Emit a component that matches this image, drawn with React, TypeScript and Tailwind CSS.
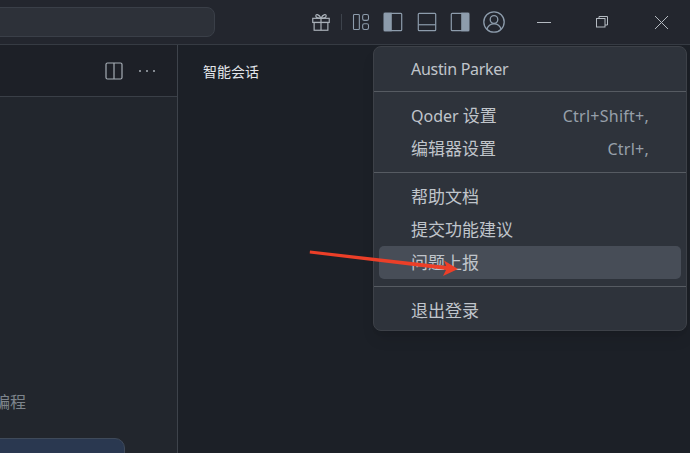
import React from "react";

const font = { fontFamily: '"Noto Sans", "Noto Sans CJK SC", sans-serif' };

function Stroke({ children, size = 24, className = "" }: { children: React.ReactNode; size?: number; className?: string }) {
  return (
    <svg width={size} height={size} viewBox="0 0 24 24" fill="none" stroke="currentColor" strokeWidth="1.300" className={className}>
      {children}
    </svg>
  );
}

function Row({ label, shortcut, active }: { label: React.ReactNode; shortcut?: string; active?: boolean }) {
  return (
    <div className={`mx-[5px] flex h-[33px] shrink-0 items-center justify-between rounded-[5px] pl-[32px] pr-[32px] ${active ? "bg-[#474d57]" : ""}`}>
      <span className="text-[17px]">{label}</span>
      {shortcut && <span className="tracking-[0.25px] text-[#97a0aa]">{shortcut}</span>}
    </div>
  );
}

export default function App() {
  return (
    <div style={font} className="relative flex h-[453px] w-[690px] flex-col overflow-hidden bg-[#1e2229] text-[#c0c5cb]">
      {/* Title bar */}
      <header className="flex h-[45px] shrink-0 items-center border-b border-[#363b43] bg-[#23262e]">
        <div className="ml-[-10px] h-[30px] w-[225px] rounded-[8px] border border-[#3a3f48] bg-[#2d3139]" />
        <div className="ml-auto flex items-center text-[#8d9cac]">
          <Stroke size={22} className="text-[#a9b0b8]">
            <rect x="3" y="8" width="18" height="4.500" />
            <rect x="4.500" y="12.500" width="15" height="8.500" />
            <path d="M12 8v13M12 8C10 3.500 5.500 2.500 6.500 6c.4 1.500 3.500 2 5.500 2s5.100-.5 5.500-2C18.500 2.500 14 3.500 12 8" />
          </Stroke>
          <div className="ml-[9px] h-[16px] w-px bg-[#3d434c]" />
          <Stroke size={20} className="ml-[9px]">
            <rect x="3" y="3" width="7" height="18" rx="1" />
            <rect x="14" y="3" width="7" height="7" rx="2" />
            <rect x="14" y="14" width="7" height="7" rx="2" />
          </Stroke>
          <Stroke size={22} className="ml-[11px]">
            <rect x="2.500" y="2.500" width="19" height="19" rx="1" />
            <rect x="2.500" y="2.500" width="7.500" height="19" fill="currentColor" />
          </Stroke>
          <Stroke size={22} className="ml-[12px]">
            <rect x="2.500" y="2.500" width="19" height="19" rx="1" />
            <path d="M2.500 15h19" />
          </Stroke>
          <Stroke size={22} className="ml-[11px]">
            <rect x="2.500" y="2.500" width="19" height="19" rx="1" />
            <rect x="14" y="2.500" width="7.500" height="19" fill="currentColor" />
          </Stroke>
          <Stroke size={24} className="ml-[11px]">
            <circle cx="12" cy="12" r="10.200" />
            <circle cx="12" cy="9.500" r="3.800" />
            <path d="M5 19c1-3.500 4-5.200 7-5.200s6 1.700 7 5.200" />
          </Stroke>
        </div>
        <div className="flex items-center text-[#b4bac1]">
          <div className="ml-[31px] h-px w-[14px] bg-[#b4bac1]" />
          <svg width="14" height="14" viewBox="0 0 14 14" fill="none" stroke="currentColor" className="ml-[44px]">
            <rect x="1.500" y="3.500" width="8.500" height="8.500" />
            <path d="M4 3.500V1.500h8.500V10H10" />
          </svg>
          <svg width="15" height="15" viewBox="0 0 15 15" fill="none" stroke="currentColor" className="ml-[45px] mr-[21px]">
            <path d="M1 1l13 13M14 1L1 14" />
          </svg>
        </div>
      </header>

      {/* Main */}
      <main className="flex min-h-0 flex-1">
        <section className="flex w-[178px] shrink-0 flex-col overflow-hidden border-r border-[#3e434b]">
          <div className="flex h-[52px] shrink-0 items-center justify-end border-b border-[#3a3f47] bg-[#1d2027] pr-[21px] text-[#a6adb5]">
            <svg width="18" height="18" viewBox="0 0 18 18" fill="none" stroke="currentColor" strokeWidth="1.200">
              <rect x="1" y="1" width="16" height="16" rx="1.500" />
              <path d="M9 1v16" />
            </svg>
            <svg width="18" height="18" viewBox="0 0 18 18" fill="currentColor" className="ml-[15px]">
              <circle cx="2" cy="9" r="1" />
              <circle cx="9" cy="9" r="1" />
              <circle cx="16" cy="9" r="1" />
            </svg>
          </div>
          <div className="flex min-h-0 flex-1 flex-col bg-[#22262d]">
            <div className="ml-[-6px] mt-[293px] whitespace-nowrap text-[16px] leading-[24px] text-[#7d848c]">编程</div>
            <div className="ml-[-20px] mt-[24px] h-[60px] w-[145px] shrink-0 rounded-[10px] border border-[#3f4a5a] bg-[#2a3850]" />
          </div>
        </section>
        <section className="min-w-0 flex-1 bg-[#1c2027] pl-[25px] pt-[16px]">
          <div className="text-[14px] leading-[22px] text-[#e3e6ea]">智能会话</div>
        </section>
      </main>

      {/* Dropdown menu */}
      <div className="absolute left-[373px] top-[46px] flex h-[285px] w-[314px] flex-col rounded-[8px] border border-[#3d4148] bg-[#2e333b] text-[16px] leading-[24px] shadow-lg">
        <div className="flex h-[44px] shrink-0 items-center pl-[37px] tracking-[-0.3px]">Austin Parker</div>
        <div className="h-px shrink-0 bg-[#565b62]" />
        <div className="flex flex-col py-[7px]">
          <Row label={<><span className="text-[16px]">Qoder </span>设置</>} shortcut="Ctrl+Shift+," />
          <Row label="编辑器设置" shortcut="Ctrl+," />
        </div>
        <div className="h-px shrink-0 bg-[#565b62]" />
        <div className="flex flex-col py-[7px]">
          <Row label="帮助文档" />
          <Row label="提交功能建议" />
          <Row label="问题上报" active />
        </div>
        <div className="h-px shrink-0 bg-[#565b62]" />
        <div className="flex flex-col pt-[7px]">
          <Row label="退出登录" />
        </div>
      </div>

      {/* Annotation arrow */}
      <svg width="170" height="40" viewBox="0 0 170 40" className="pointer-events-none absolute left-[305px] top-[245px]">
        <path d="M5 5.500L4.700 8.500L142 25L142 21Z" fill="#ec3f28" />
        <path d="M153 24L138 31L142 23L139 15.500Z" fill="#ec3f28" />
      </svg>
    </div>
  );
}
